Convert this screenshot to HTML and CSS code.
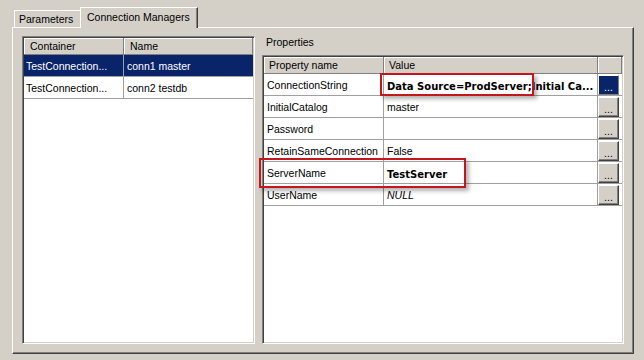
FILE: index.html
```html
<!DOCTYPE html>
<html lang="en">
	<head>
		<meta charset="UTF-8" />
		<title>Connection Managers</title>
		<link rel="stylesheet" href="styles.css">
	</head>
	<body>
		<div class="tabbar">
			<div class="tab">Parameters</div>
			<div class="tab active">Connection Managers</div>
		</div>

		<div class="panel">
			<!-- connection manager list -->
			<div class="sunken list">
				<div class="grid list-grid">
					<div class="head">Container</div>
					<div class="head">Name</div>

					<div class="cell first selected">TestConnection...</div>
					<div class="cell selected name">conn1 master</div>

					<div class="cell first">TestConnection...</div>
					<div class="cell name">conn2 testdb</div>
				</div>
			</div>

			<!-- property grid -->
			<div class="props">
				<div class="props-label">Properties</div>
				<div class="sunken propbox">
					<div class="grid prop-grid">
						<div class="head">Property name</div>
						<div class="head">Value</div>
						<div class="head"></div>

						<div class="cell first">ConnectionString</div>
						<div class="cell value strong">Data Source=ProdServer;Initial Ca...</div>
						<div class="btn-cell"><span class="dots active">...</span></div>

						<div class="cell first">InitialCatalog</div>
						<div class="cell value">master</div>
						<div class="btn-cell"><span class="dots">...</span></div>

						<div class="cell first">Password</div>
						<div class="cell value"></div>
						<div class="btn-cell"><span class="dots">...</span></div>

						<div class="cell first">RetainSameConnection</div>
						<div class="cell value">False</div>
						<div class="btn-cell"><span class="dots">...</span></div>

						<div class="cell first">ServerName</div>
						<div class="cell value strong">TestServer</div>
						<div class="btn-cell"><span class="dots">...</span></div>

						<div class="cell first">UserName</div>
						<div class="cell value null">NULL</div>
						<div class="btn-cell"><span class="dots">...</span></div>
					</div>

					<!-- red call-outs drawn over the grid -->
					<div class="callout callout-conn"></div>
					<div class="callout callout-server"></div>
				</div>
			</div>
		</div>
	</body>
</html>
```

FILE: styles.css
```css
:root {
	--face: #d4d0c8;
	--shadow: #808080;
	--dark: #404040;
	--grid-line: #a0a0a0;
	--navy: #0a246a;
	--red: #c4161c;
}

* {
	margin: 0;
	padding: 0;
	box-sizing: border-box;
}

body {
	width: 644px;
	height: 360px;
	overflow: hidden;
	background: var(--face);
	color: #000;
	font-family: "Liberation Sans", Arial, sans-serif;
	font-size: 10.5px;
	line-height: 13px;
}

/* tabs */
.tabbar {
	display: flex;
	align-items: flex-end;
	height: 27px;
	margin-left: 14px;
}

.tab {
	width: 66px;
	height: 17px;
	padding: 2px 0 0 4px;
	border-top: 1px solid #fff;
	border-left: 1px solid #fff;
	white-space: nowrap;
}

.tab.active {
	position: relative;
	z-index: 1;
	width: 118px;
	height: 21px;
	margin-bottom: -1px;
	padding: 3px 0 0 6px;
	background: var(--face);
	border-right: 1px solid var(--dark);
	box-shadow: inset -1px 0 var(--shadow);
}

/* tab page */
.panel {
	display: flex;
	gap: 7px;
	width: 622px;
	height: 327px;
	margin-left: 12px;
	padding: 8px 0 0 9px;
	border-top: 1px solid #fff;
	border-left: 1px solid #fff;
	border-right: 1px solid var(--dark);
	border-bottom: 1px solid var(--dark);
	box-shadow: inset -1px -1px var(--shadow);
}

.sunken {
	background: #fff;
	padding: 1px;
	border: 1px solid;
	border-color: var(--shadow) #fff #fff var(--shadow);
	box-shadow: inset 1px 1px var(--dark), inset -1px -1px var(--face);
}

.list {
	width: 233px;
	height: 308px;
}

.props {
	width: 362px;
}

.props-label {
	height: 19px;
	padding-left: 4px;
}

.propbox {
	position: relative;
	height: 289px;
}

/* grids */
.grid {
	display: grid;
	grid-auto-rows: 22px;
}

.list-grid {
	grid-template-columns: 100px 1fr;
	grid-template-rows: 17px;
}

.prop-grid {
	grid-template-columns: 120px 214px 24px;
	grid-template-rows: 17px;
}

.head {
	padding: 2px 0 0 6px;
	background: var(--face);
	border-right: 1px solid var(--shadow);
	border-bottom: 1px solid var(--shadow);
	box-shadow: inset 1px 1px #fff;
	white-space: nowrap;
}

.prop-grid .head {
	padding-left: 5px;
}

.cell {
	padding: 5px 0 0 3px;
	border-bottom: 1px solid var(--grid-line);
	white-space: nowrap;
	overflow: hidden;
}

.cell.first {
	border-right: 1px solid var(--grid-line);
}

.list-grid .cell.first {
	padding-left: 2px;
}

.prop-grid .cell.value {
	border-right: 1px solid var(--grid-line);
}

.cell.selected {
	background: var(--navy);
	color: #fff;
}

.strong {
	font-family: "DejaVu Sans", Verdana, sans-serif;
	font-weight: bold;
	font-size: 10px;
	padding-top: 6px;
}

.null {
	font-style: italic;
}

/* ellipsis buttons */
.btn-cell {
	padding: 1px 0 0 0;
	border-bottom: 1px solid var(--grid-line);
}

.dots {
	display: block;
	width: 21px;
	height: 20px;
	padding-top: 5px;
	text-align: center;
	background: var(--face);
	border: 1px solid;
	border-color: #fff var(--dark) var(--dark) #fff;
	box-shadow: inset -1px -1px var(--shadow);
}

.dots.active {
	background: var(--navy);
	color: #fff;
	border-color: #fff var(--shadow) var(--shadow) #fff;
	box-shadow: none;
}

/* annotation boxes */
.callout {
	position: absolute;
	border: 2px solid var(--red);
	box-shadow: 3px 3px 4px rgba(0, 0, 0, 0.3);
}

.callout-conn {
	left: 117px;
	top: 17px;
	width: 154px;
	height: 23px;
}

.callout-server {
	left: -4px;
	top: 102px;
	width: 207px;
	height: 30px;
}
```
